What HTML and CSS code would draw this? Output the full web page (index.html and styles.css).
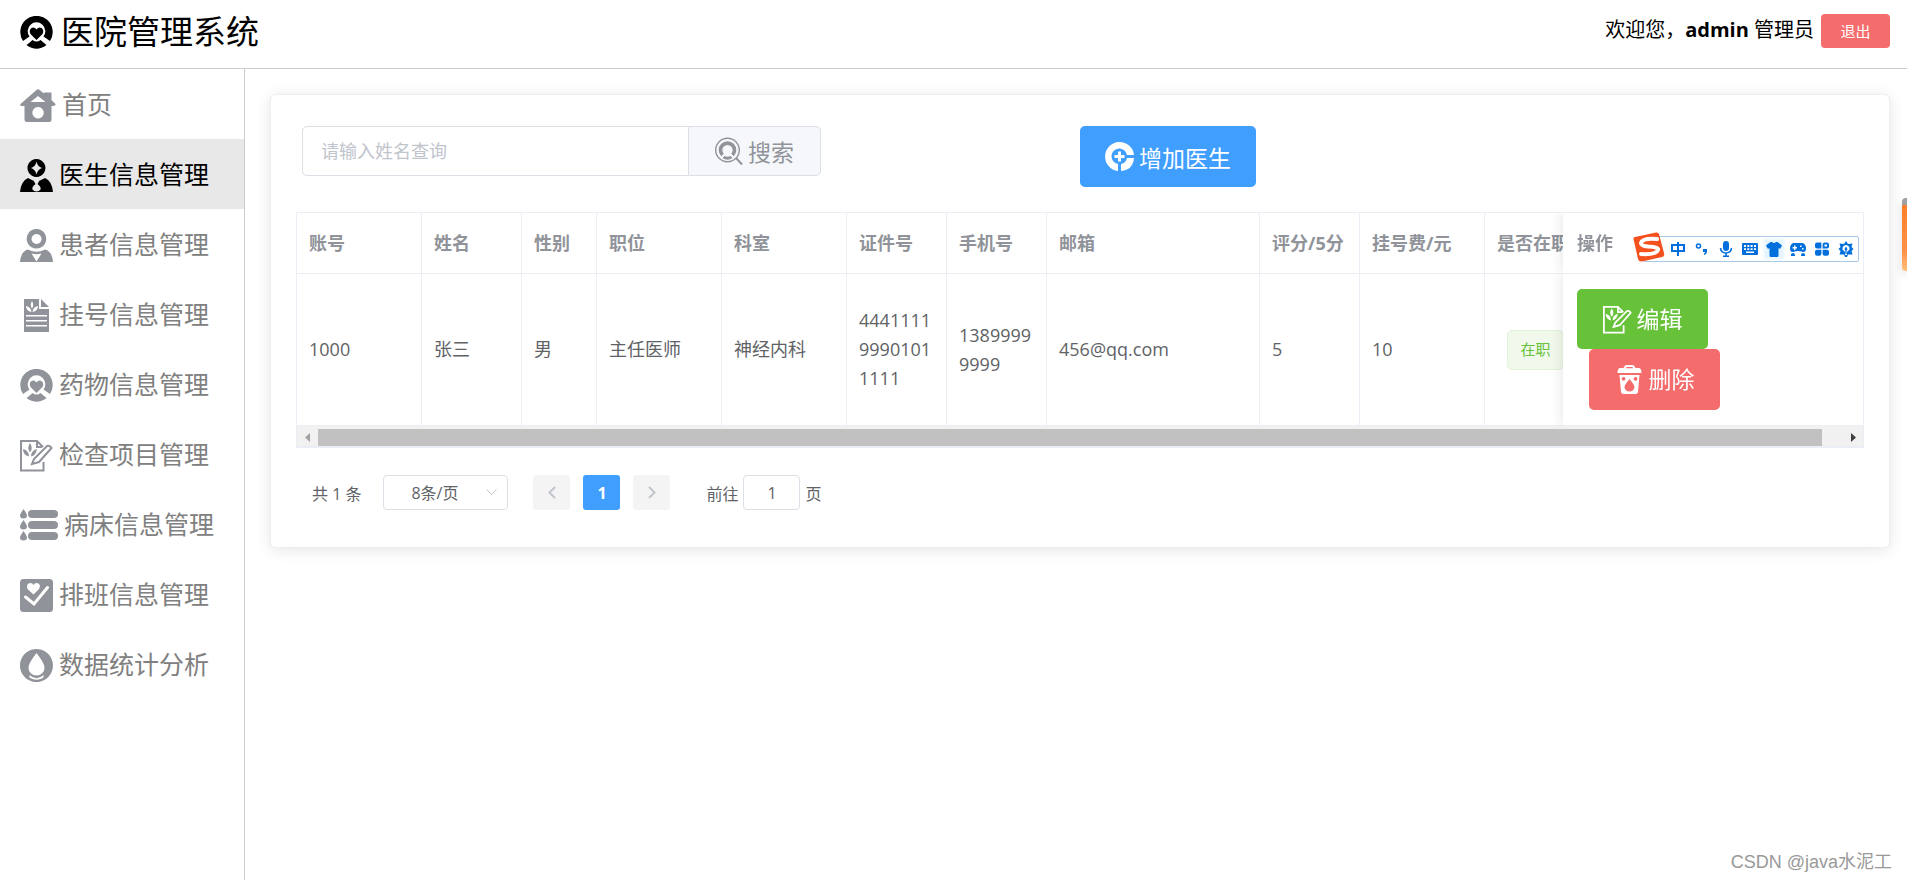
FILE: index.html
```html
<!DOCTYPE html>
<html lang="zh-CN">
<head>
<meta charset="utf-8">
<title>医院管理系统</title>
<link rel="stylesheet" href="styles.css">
</head>
<body>
<svg class="sprite" aria-hidden="true">
  <symbol id="i-heart-ring" viewBox="0 0 33 33">
    <path fill-rule="evenodd" d="M3 25A16.2 16.2 0 1 1 30 25L23.5 20.5A8.8 8.8 0 1 0 9.5 20.5ZM8.5 27.5L12.5 24Q16.500 27 20.500 24L26.500 29Q16.500 36.500 6.500 29Z"/>
    <path d="M16.500 24L10.500 18Q8.500 14.500 11.500 12Q14.500 10.500 16.500 13.500Q18.500 10.500 21.500 12Q24.500 14.500 22.500 18Z"/>
  </symbol>
  <symbol id="i-home" viewBox="0 0 36 33">
    <path fill-rule="evenodd" d="M17 .5Q18 0 19 .5L24 4.500V3.500H31.500V11L35.500 15Q36 17 33 17H31.500V30.500Q31.500 33 29 33H7Q4.500 33 4.500 30.500V17H2Q-.5 17 .5 15ZM18 7L10.500 13H25.500ZM18 18A5.700 5.700 0 1 0 18.100 18Z"/>
  </symbol>
  <symbol id="i-doctor" viewBox="0 0 33 33">
    <path fill-rule="evenodd" d="M16.500 0A9 9 0 1 1 16.400 0ZM16.500 2.500Q15.500 7.500 11 9Q15.500 10.500 16.500 15.500Q17.500 10.500 22 9Q17.500 7.500 16.500 2.500ZM0 33Q1 22 8 19L13 21.500H20L25 19Q32 22 33 33ZM13.500 21.500L15.500 25Q11.500 28 12.500 30.500Q14 32.500 16.500 32.500Q19 32.500 20.500 30.500Q21.500 28 17.500 25L19.500 21.500Z"/>
  </symbol>
  <symbol id="i-patient" viewBox="0 0 33 33">
    <path fill-rule="evenodd" d="M16.500 0A9.800 9.800 0 1 1 16.400 0ZM16.500 5A5 5 0 1 0 16.600 5ZM0 33Q1 22 8 20.500Q16.500 25 25 20.500Q32 22 33 33ZM11.500 24.500L16.500 32.500L21.500 24.500Q16.500 26 11.500 24.500Z"/>
  </symbol>
  <symbol id="i-form" viewBox="0 0 25 33">
    <path fill-rule="evenodd" d="M0 0H15V10H25V33H0ZM8 2Q5.500 6 8 9.500Q10.500 6 8 2ZM2 7Q2 12 7.500 13Q7 8 2 7ZM14 7Q9 8 8.500 13Q14 12 14 7ZM2 16V17.500H23V16ZM2 21V22.500H23V21ZM2 26V27.500H23V26Z"/>
    <path d="M17 0L25 8H17Z"/>
  </symbol>
  <symbol id="i-edit" viewBox="0 0 33 33">
    <path fill="none" stroke="currentColor" stroke-width="2" d="M23.500 23V31.500H1V2H17L23 8M17 2V8H22M14 20L27 7Q30 6 31.500 9L19 23L12 25Z"/>
    <path d="M10 4Q6.500 9 10 13.500Q13.500 9 10 4ZM3 10Q3 16 9 17.500Q9 11.500 3 10ZM17 10Q11 11.500 11 17.500Q16 16.500 17 10Z"/>
  </symbol>
  <symbol id="i-list" viewBox="0 0 38 32">
    <rect x="8" y="1" width="30" height="8" rx="4"/><rect x="8" y="12" width="30" height="8" rx="4"/><rect x="8" y="23" width="30" height="8" rx="4"/>
    <path d="M3.500 0Q7 5 7 6.500A3.500 3 0 0 1 0 6.500Q0 5 3.500 0ZM3.500 11Q7 16 7 17.500A3.500 3 0 0 1 0 17.500Q0 16 3.500 11ZM3.500 22Q7 27 7 28.500A3.500 3 0 0 1 0 28.500Q0 27 3.500 22Z"/>
  </symbol>
  <symbol id="i-check" viewBox="0 0 33 33">
    <rect width="33" height="33" rx="3.500"/>
    <path fill="none" stroke="#fff" stroke-width="3" stroke-linecap="round" d="M5.500 18L14 25L27.500 8.500"/>
    <path fill="#fff" d="M13.500 15.500L7.500 10Q6 6.500 8.500 4.500Q12 3 13.500 6Q15 3 18.500 4.500Q21 6.500 19 10Z"/>
  </symbol>
  <symbol id="i-drop" viewBox="0 0 33 33">
    <path fill-rule="evenodd" d="M16.500 0A16.500 16.500 0 1 1 16.400 0ZM16.500 4Q8 15 8.500 19A8 7.500 0 0 0 24.500 19Q25 15 16.500 4ZM9.500 26Q16.500 32.500 23.500 26V28.500Q16.500 33 9.500 28.500Z"/>
  </symbol>
  <symbol id="i-search" viewBox="0 0 28 28">
    <g fill="none" stroke="currentColor"><circle cx="12.500" cy="13" r="11.800" stroke-width="1.400"/><path stroke-width="2" d="M21 21L27 27.500"/><path stroke-width="3.600" d="M7.500 18A7 7 0 1 1 17.500 18"/></g>
    <path d="M9.500 19Q12.500 20.500 15.500 19L17.500 21Q12.500 24.500 7.500 21Z"/>
  </symbol>
  <symbol id="i-add" viewBox="0 0 29 29">
    <path fill-rule="evenodd" d="M13 29A14.500 14.500 0 1 1 29 13H22A7.800 7.800 0 1 0 13 22ZM16 29V22Q21 21 22 16H29Q28 28 16 29Z"/>
    <path d="M13 9.500H16V13H19.500V16H16V19.500H13V16H9.500V13H13Z"/>
  </symbol>
  <symbol id="i-trash" viewBox="0 0 24 29">
    <path fill-rule="evenodd" d="M6 3Q7 0 9 0H15Q17 0 18 3H22Q24 4 24 8H0Q0 4 2 3ZM8.500 3.200H15.500L15 2H9ZM2 10H22L20.500 27Q20 29 18 29H6Q4 29 3.500 27ZM12 14Q7 20 7 22A5 4.500 0 0 0 17 22Q17 20 12 14ZM6 12A1.900 1.900 0 1 0 6.100 12ZM18 12A1.900 1.900 0 1 0 18.100 12Z"/>
  </symbol>
</svg>

<header class="topbar">
  <h1 class="brand"><svg class="icon"><use href="#i-heart-ring"/></svg>医院管理系统</h1>
  <div class="user"><span>欢迎您，<b>admin</b> 管理员</span><button class="btn-exit" type="button">退出</button></div>
</header>

<div class="body">
  <nav class="side">
    <a href="#"><svg class="icon icon-home"><use href="#i-home"/></svg><span>首页</span></a>
    <a href="#" class="active" aria-current="page"><svg class="icon"><use href="#i-doctor"/></svg><span>医生信息管理</span></a>
    <a href="#"><svg class="icon"><use href="#i-patient"/></svg><span>患者信息管理</span></a>
    <a href="#"><svg class="icon"><use href="#i-form"/></svg><span>挂号信息管理</span></a>
    <a href="#"><svg class="icon"><use href="#i-heart-ring"/></svg><span>药物信息管理</span></a>
    <a href="#"><svg class="icon"><use href="#i-edit"/></svg><span>检查项目管理</span></a>
    <a href="#"><svg class="icon icon-list"><use href="#i-list"/></svg><span>病床信息管理</span></a>
    <a href="#"><svg class="icon"><use href="#i-check"/></svg><span>排班信息管理</span></a>
    <a href="#"><svg class="icon"><use href="#i-drop"/></svg><span>数据统计分析</span></a>
  </nav>

  <main class="main">
    <section class="card">
      <div class="tools">
        <form class="search">
          <input type="text" aria-label="姓名" placeholder="请输入姓名查询">
          <button type="button"><svg class="icon"><use href="#i-search"/></svg>搜索</button>
        </form>
        <button class="btn btn-add" type="button"><svg class="icon"><use href="#i-add"/></svg>增加医生</button>
      </div>

      <div class="grid">
        <div class="viewport">
          <table>
            <colgroup><col class="w125"><col class="w100"><col class="w75"><col class="w125"><col class="w125"><col class="w100"><col class="w100"><col><col class="w100"><col class="w125"><col class="w100"><col class="w300"></colgroup>
            <thead>
              <tr><th>账号</th><th>姓名</th><th>性别</th><th>职位</th><th>科室</th><th>证件号</th><th>手机号</th><th>邮箱</th><th>评分/5分</th><th>挂号费/元</th><th>是否在职</th><th class="fixed">操作</th></tr>
            </thead>
            <tbody>
              <tr><td>1000</td><td>张三</td><td>男</td><td>主任医师</td><td>神经内科</td><td>444111199901011111</td><td>13899999999</td><td>456@qq.com</td><td>5</td><td>10</td><td><span class="tag">在职</span></td>
                <td class="fixed"><div class="actions"><button class="btn btn-edit" type="button"><svg class="icon"><use href="#i-edit"/></svg>编辑</button><button class="btn btn-del" type="button"><svg class="icon"><use href="#i-trash"/></svg>删除</button></div></td></tr>
            </tbody>
          </table>
        </div>
        <div class="scroll">
          <svg class="arrow" viewBox="0 0 21 17"><path fill="#a3a3a3" d="M13 4V13L8 8.500Z"/></svg>
          <div class="track"><div class="thumb"></div></div>
          <svg class="arrow" viewBox="0 0 21 17"><path fill="#404040" d="M9 4V13L14 8.500Z"/></svg>
        </div>

        <div class="ime">
          <svg class="ime-logo" viewBox="0 0 32 30"><path fill="#f4511e" d="M2 5Q0 5 .5 7L5 27Q6 30 9 29.500L29 25Q32 24 31 21L26 2Q25 0 23 .5Z"/><path fill="none" stroke="#fff" stroke-width="4" stroke-linecap="round" d="M24 7Q9 6 8 11Q8 14 15 14.500Q26 15 25 18Q23 23 8 22"/></svg>
          <svg class="ime-icon" viewBox="0 0 16 16"><path fill="none" stroke="currentColor" stroke-width="2" d="M2 4H14V10H2ZM8 1V15"/></svg>
          <svg class="ime-icon" viewBox="0 0 16 16"><circle cx="4.500" cy="5" r="2" fill="none" stroke="currentColor" stroke-width="1.500"/><path d="M9 8H13V11Q12.500 13.500 10 14V12.500Q11 12 11 11H9Z"/></svg>
          <svg class="ime-icon" viewBox="0 0 16 16"><rect x="5" y="0" width="6" height="10" rx="3"/><path fill="none" stroke="currentColor" stroke-width="1.600" d="M2.500 7Q3 12 8 12T13.500 7M8 12V15M5 15.200H11"/></svg>
          <svg class="ime-icon" viewBox="0 0 16 16"><path fill-rule="evenodd" d="M1 2H15Q16 2 16 3V13Q16 14 15 14H1Q0 14 0 13V3Q0 2 1 2ZM2 4V6H4V4ZM5.300 4V6H7.300V4ZM8.600 4V6H10.600V4ZM12 4V6H14V4ZM2 7.200V9H4V7.200ZM5.300 7.200V9H7.300V7.200ZM8.600 7.200V9H10.600V7.200ZM12 7.200V9H14V7.200ZM4 10.500V12H12V10.500Z"/></svg>
          <svg class="ime-icon ime-shirt" viewBox="0 0 16 16"><path d="M4.500 1H6Q8 3 10 1H11.500L16 4.500L14 8L12.500 7V14.500Q12.500 16 11 16H5Q3.500 16 3.500 14.500V7L2 8L0 4.500Z"/></svg>
          <svg class="ime-icon" viewBox="0 0 16 16"><path fill-rule="evenodd" d="M3.500 2H12.500Q16 3 16 7.500Q16 11 13 11Q8 9 3 11Q0 11 0 7.500Q0 3 3.500 2ZM4 4.500V6H2.500V7.500H4V9H5.500V7.500H7V6H5.500V4.500ZM10 4.500V6H11.500V4.500ZM12 7V8.500H13.500V7Z"/><path d="M3 12Q5 12 5 15H1V13ZM13 12Q11 12 11 15H15V13Z"/></svg>
          <svg class="ime-icon" viewBox="0 0 16 16"><path fill-rule="evenodd" d="M3 1.500H7.400V7.500H3Q1 7.500 1 5.500V3.500Q1 1.500 3 1.500ZM10.600 1.500H13Q15 1.500 15 3.500V5.500Q15 7.500 13 7.500H8.600V3.500Q8.600 1.500 10.600 1.500ZM10.500 3.400V5.600H13V3.400ZM3 8.700H7.400V12.700Q7.400 14.700 5.400 14.700H3Q1 14.700 1 12.700V10.700Q1 8.700 3 8.700ZM8.600 8.700H13Q15 8.700 15 10.700V12.700Q15 14.700 13 14.700H10.600Q8.600 14.700 8.600 12.700Z"/></svg>
          <svg class="ime-icon" viewBox="0 0 16 16"><path fill-rule="evenodd" d="M8 0L10 3L14.500 2.500L13.500 6L15.500 8L13.500 10L14.500 13.500L10 13.500L9 16H7L6 13.500L1.500 13.500L2.500 10L.5 8L2.500 6L1.500 2.500L6 3ZM8 4Q4 4.500 4.500 8.500L7 11V14H9V11L11.500 8.500Q12 4.500 8 4Z"/><path d="M8 5.500L9.500 8L8.600 9.500V13H7.400V9.500L6.500 8Z"/></svg>
        </div>
      </div>

      <div class="pager">
        <span class="total">共 1 条</span>
        <span class="size"><select aria-label="每页条数"><option>8条/页</option></select><svg viewBox="0 0 11 7"><path d="M.5 .5L5.500 5.500L10.500 .5"/></svg></span>
        <button class="page prev" type="button" disabled aria-label="上一页"><svg viewBox="0 0 8 13"><path d="M7 1L1.500 6.500L7 12"/></svg></button>
        <button class="page current" type="button">1</button>
        <button class="page" type="button" disabled aria-label="下一页"><svg viewBox="0 0 8 13"><path d="M1 1L6.500 6.500L1 12"/></svg></button>
        <label class="jump">前往<input type="text" value="1">页</label>
      </div>
    </section>
  </main>
</div>
<div class="edge-tab"></div>
<div class="watermark">CSDN @java水泥工</div>
</body>
</html>
```
FILE: styles.css
```css
* { box-sizing: border-box; }
body {
  margin: 0;
  min-height: 100vh;
  display: flex;
  flex-direction: column;
  background: #fff;
  color: #000;
  font-family: "Open Sans", "Noto Sans CJK SC", sans-serif;
  font-size: 20px;
}
button, input, select { font: inherit; color: inherit; margin: 0; }
button { cursor: pointer; border: 0; }
.sprite { position: absolute; width: 0; height: 0; }
.icon { flex: none; width: 33px; height: 33px; fill: currentColor; }

.topbar {
  display: flex;
  justify-content: space-between;
  align-items: flex-start;
  height: 69px;
  padding: 14px 17px 0 20px;
  border-bottom: 1px solid #ccc;
}
.brand {
  display: flex;
  align-items: center;
  gap: 8px;
  margin: 0;
  font-size: 33px;
  line-height: 36px;
  font-weight: 400;
}
.user { display: flex; gap: 7px; line-height: 32px; }
.btn-exit {
  width: 69px;
  height: 34px;
  padding: 0;
  border-radius: 4px;
  background: #f56c6c;
  color: #fff;
  font-size: 15px;
}

.body { flex: 1; display: flex; }
.side { flex: none; width: 245px; border-right: 1px solid #ccc; }
.side a {
  display: flex;
  align-items: center;
  gap: 6px;
  height: 70px;
  padding: 2px 0 0 20px;
  color: #808080;
  font-size: 25px;
  line-height: 36px;
  text-decoration: none;
}
.side span { padding-bottom: 2px; }
.side .icon { color: #909399; }
.side .active { background: #e8e8e8; color: #000; }
.side .active .icon { color: #000; }
.side .icon-home { width: 36px; }
.side .icon-list { width: 38px; height: 32px; }

.main { flex: 1; min-width: 0; padding: 25px 17px 25px 25px; }
.card {
  padding: 31px 25px 37px;
  border: 1px solid #ebeef5;
  border-radius: 5px;
  background: #fff;
  box-shadow: 0 2px 15px rgba(0, 0, 0, .1);
}
.tools {
  display: grid;
  grid-template-columns: 1fr 1fr;
  align-items: start;
  padding: 0 6px;
}
.search { display: flex; width: 519px; height: 50px; }
.search input {
  flex: 1;
  min-width: 0;
  padding: 0 18px;
  border: 1px solid #dcdfe6;
  border-radius: 5px 0 0 5px;
  font-size: 18px;
  outline: 0;
}
.search input::placeholder { color: #c0c4cc; }
.search button {
  display: flex;
  align-items: center;
  justify-content: center;
  gap: 5px;
  width: 132px;
  border: 1px solid #dcdfe6;
  border-left: 0;
  border-radius: 0 5px 5px 0;
  background: #f5f7fa;
  color: #909399;
  font-size: 23px;
}
.search .icon { width: 28px; height: 28px; }
.btn {
  display: flex;
  align-items: center;
  justify-content: center;
  gap: 5px;
  width: 131px;
  height: 60px;
  padding: 0;
  border-radius: 5px;
  color: #fff;
  font-size: 23px;
}
.btn .icon { width: 29px; height: 29px; }
.btn-add { width: 176px; height: 61px; background: #409eff; }

.grid { position: relative; margin-top: 25px; border: 1px solid #ebeef5; border-bottom-width: 2px; }
.viewport { overflow: hidden; }
table {
  width: 100%;
  min-width: 1588px;
  table-layout: fixed;
  border-collapse: separate;
  border-spacing: 0;
  font-size: 18px;
  line-height: 29px;
}
.w75 { width: 75px; }
.w100 { width: 100px; }
.w125 { width: 125px; }
.w300 { width: 300px; }
th, td {
  padding: 15px 12px;
  border-right: 1px solid #ebeef5;
  border-bottom: 1px solid #ebeef5;
  text-align: left;
  color: #606266;
  word-break: break-all;
}
th { color: #909399; height: 61px; white-space: nowrap; }
.fixed {
  position: sticky;
  right: 0;
  padding-left: 14px;
  background: #fff;
  border-right: 0;
  box-shadow: 0 0 13px rgba(0, 0, 0, .12);
  clip-path: inset(0 0 0 -16px);
}
.actions { display: flex; flex-direction: column; }
.btn-edit { background: #67c23a; }
.btn-del { height: 61px; margin-left: 12px; background: #f56c6c; }
.tag {
  display: block;
  width: 57px;
  height: 40px;
  margin-left: 10px;
  border: 1px solid #e1f3d8;
  border-radius: 5px;
  background: #f0f9eb;
  color: #67c23a;
  font-size: 15px;
  line-height: 36px;
  text-align: center;
}
.scroll { display: flex; padding-top: 3px; background: #f1f1f1; }
.arrow { flex: none; width: 21px; height: 17px; }
.track { flex: 1; }
.thumb { width: 98.7%; height: 17px; background: #c1c1c1; }

.ime {
  position: absolute;
  top: 23px;
  right: 4px;
  display: flex;
  align-items: center;
  gap: 8px;
  width: 216px;
  height: 26px;
  padding: 0 5px 0 26px;
  border: 1px solid #a9c8e8;
  border-radius: 2px;
  background: #fff;
  color: #006fdc;
}
.ime-logo { position: absolute; left: -11px; top: -5px; width: 32px; height: 30px; }
.ime-icon { flex: none; width: 16px; height: 16px; fill: currentColor; }
.ime-shirt { background: #e3f4ff; box-shadow: 0 0 3px 2px #e3f4ff; }

.pager { display: flex; align-items: center; margin-top: 27px; padding-left: 16px; color: #606266; font-size: 16px; }
.total { margin-right: 22px; }
.size { position: relative; display: flex; margin-right: 25px; }
.size select {
  width: 125px;
  height: 35px;
  padding: 0 22px 0 0;
  appearance: none;
  border: 1px solid #dcdfe6;
  border-radius: 4px;
  background: #fff;
  text-align: center;
  text-align-last: center;
}
.size svg { position: absolute; right: 11px; top: 14px; width: 11px; height: 7px; fill: none; stroke: #c0c4cc; }
.page {
  display: flex;
  align-items: center;
  justify-content: center;
  width: 37px;
  height: 35px;
  margin-right: 13px;
  padding: 0;
  border-radius: 3px;
  background: #f4f4f5;
}
.page svg { width: 8px; height: 13px; fill: none; stroke: #c0c4cc; stroke-width: 2; }
.current { background: #409eff; color: #fff; font-weight: 700; }
.jump { display: flex; align-items: center; gap: 5px; margin-left: 23px; }
.jump input {
  width: 57px;
  height: 35px;
  padding: 0;
  border: 1px solid #dcdfe6;
  border-radius: 4px;
  text-align: center;
}

.edge-tab {
  position: absolute;
  right: 0;
  top: 198px;
  width: 5px;
  height: 73px;
  border-top: 7px solid #a0a0a0;
  border-radius: 4px 0 0 4px;
  background: linear-gradient(#ff7f27, #ff9147 70%, #ffc07a);
  box-shadow: 0 4px 8px rgba(0, 0, 0, .15);
}
.watermark {
  position: absolute;
  right: 15px;
  bottom: 4px;
  color: #999;
  font: 18px/28px "Liberation Sans", "Noto Sans CJK SC", sans-serif;
}
```
